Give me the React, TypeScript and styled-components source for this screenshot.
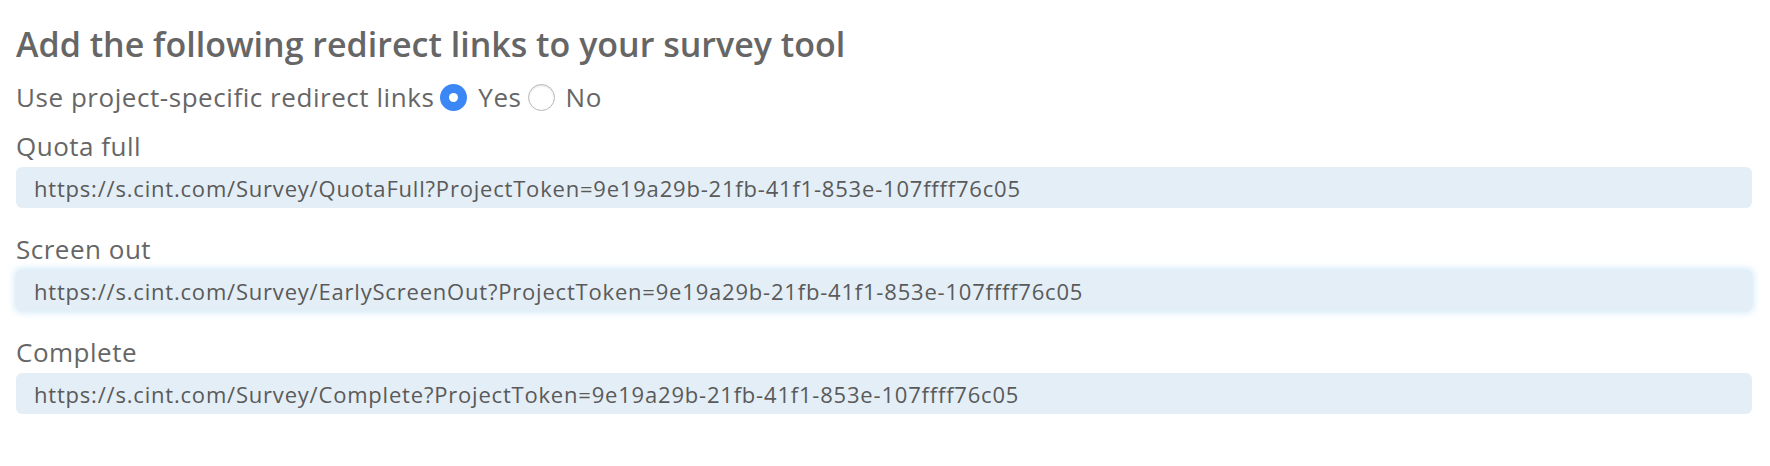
import React from "react";
import styled, { createGlobalStyle } from "styled-components";

const GlobalStyle = createGlobalStyle`
  html, body { margin: 0; padding: 0; background: #ffffff; }
  body { font-family: "Open Sans", "Noto Sans", sans-serif; color: #666666; }
`;

const Page = styled.div`
  display: flex;
  flex-direction: column;
  padding: 22px 18px 0 16px;
`;

const Title = styled.h2`
  margin: 0;
  font-size: 34px;
  line-height: 44px;
  font-weight: 600;
  color: #666666;
`;

const OptionRow = styled.div`
  display: flex;
  align-items: center;
  margin-top: 14px;
  font-size: 26px;
  line-height: 34px;
  letter-spacing: 0.55px;
  color: #666666;
`;

const RadioLabel = styled.label`
  display: inline-flex;
  align-items: center;
  gap: 11px;
  margin-left: 6px;
  cursor: pointer;
`;

const RadioCircle = styled.span<{ $checked: boolean }>`
  display: inline-block;
  box-sizing: border-box;
  width: 27px;
  height: 27px;
  border-radius: 50%;
  background: ${(p) => (p.$checked ? "#3b87f5" : "#ffffff")};
  border: ${(p) => (p.$checked ? "none" : "1px solid #b8b8b8")};
  box-shadow: ${(p) => (p.$checked ? "none" : "inset 0 1px 2px rgba(0,0,0,0.12)")};
  position: relative;
  &::after {
    content: "";
    display: ${(p) => (p.$checked ? "block" : "none")};
    position: absolute;
    left: 50%;
    top: 50%;
    width: 9px;
    height: 9px;
    margin: -4.5px 0 0 -4.5px;
    border-radius: 50%;
    background: #ffffff;
  }
`;

const FieldList = styled.div`
  display: flex;
  flex-direction: column;
  gap: 24px;
  margin-top: 15px;
`;

const Field = styled.div`
  display: flex;
  flex-direction: column;
`;

const FieldLabel = styled.div`
  font-size: 26px;
  line-height: 34px;
  letter-spacing: 0.5px;
  color: #666666;
  margin-bottom: 4px;
`;

const LinkBox = styled.div<{ $focused?: boolean }>`
  box-sizing: border-box;
  height: 41px;
  display: flex;
  align-items: center;
  padding: 0 18px;
  border-radius: 6px;
  background: #e4eef6;
  font-size: 22px;
  letter-spacing: 0.8px;
  color: #5a5a5a;
  white-space: nowrap;
  overflow: hidden;
  box-shadow: ${(p) => (p.$focused ? "0 0 6px 2px rgba(176, 218, 245, 0.55)" : "none")};
`;

const token = "9e19a29b-21fb-41f1-853e-107ffff76c05";
const links = [
  { label: "Quota full", path: "QuotaFull", focused: false },
  { label: "Screen out", path: "EarlyScreenOut", focused: true },
  { label: "Complete", path: "Complete", focused: false },
];

export default function App() {
  return (
    <>
      <GlobalStyle />
      <Page>
        <Title>Add the following redirect links to your survey tool</Title>
        <OptionRow>
          Use project-specific redirect links
          <RadioLabel>
            <RadioCircle $checked />
            Yes
          </RadioLabel>
          <RadioLabel>
            <RadioCircle $checked={false} />
            No
          </RadioLabel>
        </OptionRow>
        <FieldList>
          {links.map((l) => (
            <Field key={l.path}>
              <FieldLabel>{l.label}</FieldLabel>
              <LinkBox $focused={l.focused}>
                {`https://s.cint.com/Survey/${l.path}?ProjectToken=${token}`}
              </LinkBox>
            </Field>
          ))}
        </FieldList>
      </Page>
    </>
  );
}
